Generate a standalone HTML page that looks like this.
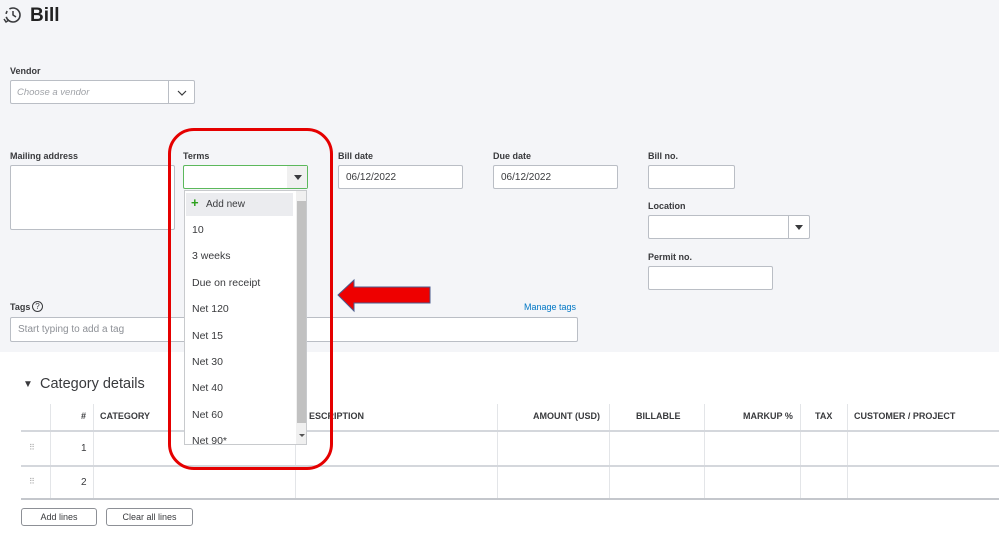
<!DOCTYPE html>
<html><head><style>
*{margin:0;padding:0;box-sizing:border-box}
body{width:999px;height:541px;overflow:hidden;font-family:"Liberation Sans",sans-serif;background:#fff;position:relative;color:#393a3d}
.top{position:absolute;left:0;top:0;width:999px;height:352px;background:#f4f5f8}
.a{position:absolute}
.lbl{font-size:9px;font-weight:bold;color:#393a3d}
.in{background:#fff;border:1px solid #babec5;border-radius:2px}
.t{font-size:10px;color:#393a3d}
.h{font-size:9px;font-weight:bold;color:#393a3d;position:absolute;top:411px}
.vl{position:absolute;top:404px;width:1px;height:95px;background:#e3e5e8}
.hl{position:absolute;left:21px;width:978px;height:1px;background:#d4d7dc}
.btn{position:absolute;top:508px;height:18px;border:1px solid #8d9096;border-radius:3px;font-size:9px;text-align:center;line-height:16px;background:#fff}
.it{position:absolute;left:192px;font-size:10.5px;color:#393a3d}
</style></head><body>
<div class="top"></div>
<svg class="a" style="left:2px;top:6px" width="20" height="20" viewBox="0 0 20 20"><circle cx="11" cy="9" r="7" fill="none" stroke="#393a3d" stroke-width="1.6" stroke-dasharray="20 3 3 3"/><path d="M11 5v4l3 2M2 13l2 3 3-2" fill="none" stroke="#393a3d" stroke-width="1.5"/></svg>
<div class="a" style="left:30px;top:5px;font-size:19px;font-weight:bold;color:#222">Bill</div>
<div class="a lbl" style="left:10px;top:66px">Vendor</div>
<div class="a in" style="left:10px;top:80px;width:185px;height:24px"><div class="a" style="left:6px;top:6px;font-size:9.5px;font-style:italic;color:#a0a3a8">Choose a vendor</div><div class="a" style="left:157px;top:0;width:1px;height:22px;background:#babec5"></div><svg class="a" style="left:166px;top:8px" width="10" height="8"><path d="M1 2l4 4 4-4" fill="none" stroke="#393a3d" stroke-width="1.2"/></svg></div>
<div class="a lbl" style="left:10px;top:151px">Mailing address</div>
<div class="a in" style="left:10px;top:165px;width:165px;height:65px"></div>
<div class="a lbl" style="left:183px;top:151px">Terms</div>
<div class="a in" style="left:183px;top:165px;width:125px;height:24px;border-color:#5cb85c"><div class="a" style="left:103px;top:0;width:20px;height:22px;background:#f0f0f0"></div><div class="a" style="left:110px;top:9px;border:4px solid transparent;border-top:5px solid #393a3d"></div></div>
<div class="a lbl" style="left:338px;top:151px">Bill date</div>
<div class="a in" style="left:338px;top:165px;width:125px;height:24px"><div class="a t" style="left:7px;top:6px">06/12/2022</div></div>
<div class="a lbl" style="left:493px;top:151px">Due date</div>
<div class="a in" style="left:493px;top:165px;width:125px;height:24px"><div class="a t" style="left:7px;top:6px">06/12/2022</div></div>
<div class="a lbl" style="left:648px;top:151px">Bill no.</div>
<div class="a in" style="left:648px;top:165px;width:87px;height:24px"></div>
<div class="a lbl" style="left:648px;top:201px">Location</div>
<div class="a in" style="left:648px;top:215px;width:162px;height:24px"><div class="a" style="left:139px;top:0;width:1px;height:22px;background:#babec5"></div><div class="a" style="left:146px;top:9px;border:4px solid transparent;border-top:5px solid #393a3d"></div></div>
<div class="a lbl" style="left:648px;top:252px">Permit no.</div>
<div class="a in" style="left:648px;top:266px;width:125px;height:24px"></div>
<div class="a lbl" style="left:10px;top:302px">Tags</div>
<div class="a" style="left:32px;top:301px;width:11px;height:11px;border:1px solid #393a3d;border-radius:50%;font-size:8px;text-align:center;line-height:9px">?</div>
<div class="a" style="left:524px;top:302px;font-size:9px;color:#0077c5">Manage tags</div>
<div class="a in" style="left:10px;top:317px;width:568px;height:25px"><div class="a" style="left:7px;top:6px;font-size:10px;color:#8d9096">Start typing to add a tag</div></div>

<div class="a" style="left:23px;top:379px;font-size:10px">▼</div>
<div class="a" style="left:40px;top:376px;font-size:14.5px;color:#393a3d">Category details</div>
<div class="vl" style="left:50px"></div><div class="vl" style="left:93px"></div><div class="vl" style="left:295px"></div><div class="vl" style="left:497px"></div><div class="vl" style="left:609px"></div><div class="vl" style="left:704px"></div><div class="vl" style="left:800px"></div><div class="vl" style="left:847px"></div>
<div class="hl" style="top:430px;height:2px"></div><div class="hl" style="top:465px;height:2px"></div><div class="hl" style="top:498px;height:2px;background:#c4c7cc"></div>
<div class="h" style="left:81px">#</div><div class="h" style="left:100px">CATEGORY</div><div class="h" style="left:309px">ESCRIPTION</div><div class="h" style="left:533px">AMOUNT (USD)</div><div class="h" style="left:636px">BILLABLE</div><div class="h" style="left:743px">MARKUP %</div><div class="h" style="left:815px">TAX</div><div class="h" style="left:854px">CUSTOMER / PROJECT</div>
<div class="a" style="left:29px;top:443px;font-size:8px;color:#aaa;letter-spacing:-1px">⠿</div><div class="a" style="left:29px;top:477px;font-size:8px;color:#aaa;letter-spacing:-1px">⠿</div>
<div class="a t" style="left:81px;top:443px">1</div><div class="a t" style="left:81px;top:477px">2</div>
<div class="btn" style="left:21px;width:76px">Add lines</div>
<div class="btn" style="left:106px;width:87px">Clear all lines</div>

<div class="a" style="left:184px;top:190px;width:123px;height:255px;background:#fff;border:1px solid #c8cacd;overflow:hidden">
<div class="a" style="left:1px;top:2px;width:107px;height:23px;background:#ebecef"></div>
<div class="a" style="left:111px;top:0;width:11px;height:253px;background:#f0f0f0"></div>
<div class="a" style="left:112px;top:10px;width:9px;height:222px;background:#c1c1c1"></div>
<div class="a" style="left:114px;top:243px;border:3px solid transparent;border-top:3px solid #555"></div>
</div>
<div class="it" style="left:191px;top:195px;color:#2ca01c;font-weight:bold;font-size:13px">+</div>
<div class="it" style="left:206px;top:199px;font-size:10px">Add new</div>
<div class="it" style="top:224px">10</div><div class="it" style="top:250px">3 weeks</div><div class="it" style="top:277px">Due on receipt</div><div class="it" style="top:303px">Net 120</div><div class="it" style="top:330px">Net 15</div><div class="it" style="top:356px">Net 30</div><div class="it" style="top:382px">Net 40</div><div class="it" style="top:409px">Net 60</div><div class="it" style="top:435px;height:9px;overflow:hidden">Net 90*</div>

<div class="a" style="left:168px;top:128px;width:165px;height:342px;border:3px solid #e50000;border-radius:26px"></div>
<svg class="a" style="left:336px;top:278px" width="98" height="36"><polygon points="2,17 18,2 18,9 94,9 94,25 18,25 18,33" fill="#ee0000" stroke="#4a5b8c" stroke-width="1"/></svg>
</body></html>
